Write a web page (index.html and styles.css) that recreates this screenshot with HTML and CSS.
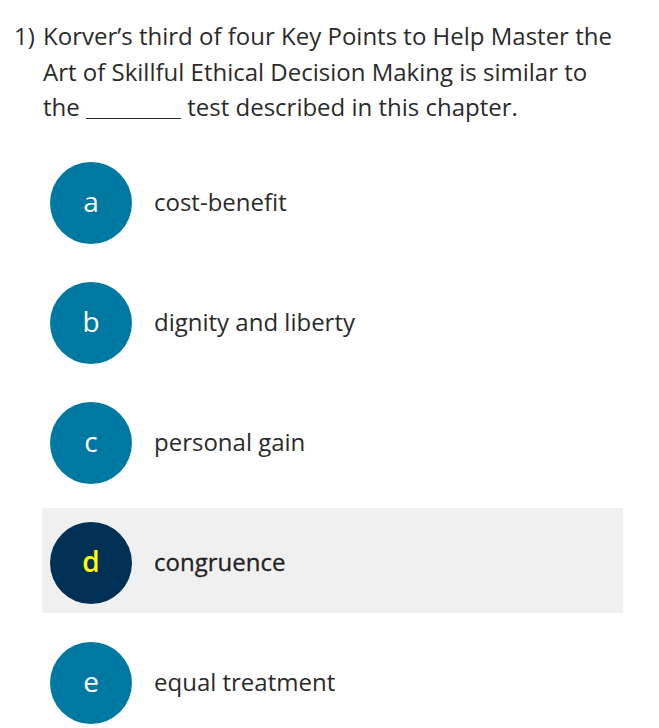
FILE: index.html
```html
<!DOCTYPE html>
<html>
<head>
<meta charset="utf-8">
<link rel="stylesheet" href="styles.css">
</head>
<body>
<div class="question">
  <span class="num">1)</span>
  <p class="stem">Korver’s third of four Key Points to Help Master the Art of Skillful Ethical Decision Making is similar to the <span class="blank"></span> test described in this chapter.</p>
</div>
<ul class="options">
  <li class="option"><span class="letter">a</span><span class="label">cost-benefit</span></li>
  <li class="option"><span class="letter">b</span><span class="label">dignity and liberty</span></li>
  <li class="option"><span class="letter">c</span><span class="label">personal gain</span></li>
  <li class="option selected"><span class="letter">d</span><span class="label">congruence</span></li>
  <li class="option"><span class="letter">e</span><span class="label">equal treatment</span></li>
</ul>
</body>
</html>
```
FILE: styles.css
```css
html, body {
  margin: 0;
  padding: 0;
  background: #ffffff;
}
body {
  font-family: "Open Sans", "DejaVu Sans", sans-serif;
  color: #2b2b2b;
  font-size: 24px;
}
.question {
  display: flex;
  padding: 18px 20px 0 14px;
}
.num {
  flex: 0 0 29px;
  line-height: 35.5px;
}
.stem {
  margin: 0;
  line-height: 35.5px;
  width: 580px;
}
.blank {
  display: inline-block;
  width: 95px;
  border-bottom: 1px solid #2b2b2b;
  vertical-align: -3px;
}
.options {
  list-style: none;
  margin: 0;
  padding: 23px 0 0 42px;
  width: 581px;
  display: flex;
  flex-direction: column;
  gap: 15px;
}
.option {
  display: flex;
  align-items: center;
  height: 105px;
  box-sizing: border-box;
  padding: 14px 8px 9px;
  gap: 22px;
}
.option.selected {
  background: #f0f0f0;
}
.letter {
  flex: 0 0 82px;
  width: 82px;
  height: 82px;
  border-radius: 50%;
  background: #0079a2;
  color: #ffffff;
  display: flex;
  align-items: center;
  justify-content: center;
  font-size: 28px;
  line-height: 1;
  padding-bottom: 3px;
  box-sizing: border-box;
}
.selected .letter {
  background: #003056;
  color: #ffff00;
  font-weight: 600;
}
.label {
  font-size: 24px;
  margin-bottom: 2px;
}
.selected .label {
  color: #222222;
  -webkit-text-stroke: 0.3px #222222;
}
```
